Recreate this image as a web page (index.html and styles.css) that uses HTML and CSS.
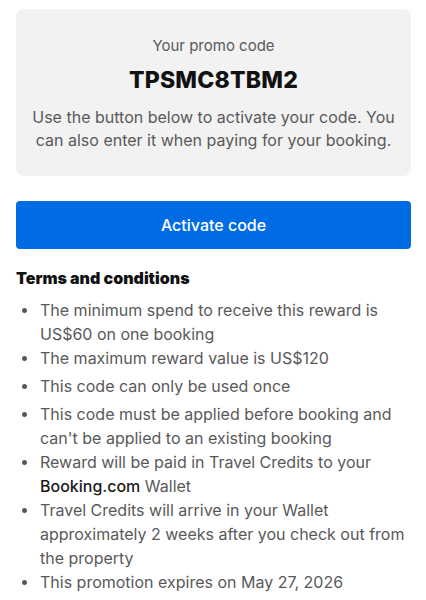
FILE: index.html
```html
<!doctype html>
<html lang="en">
<head>
	<meta charset="UTF-8">
	<title>Promo code</title>

	<link rel="stylesheet" href="styles.css">
</head>
<body>
	<div class="container">
		<div class="promo">
			<p class="promo-label">Your promo code</p>
			<p class="promo-code">TPSMC8TBM2</p>
			<p class="promo-text">Use the button below to activate your code. You can also enter it when paying for your booking.</p>
		</div>

		<button class="activate">Activate code</button>

		<h2>Terms and conditions</h2>
		<ul class="terms">
			<li>The minimum spend to receive this reward is US$60 on one booking</li>
			<li>The maximum reward value is US$120</li>
			<li>This code can only be used once</li>
			<li>This code must be applied before booking and can't be applied to an existing booking</li>
			<li>Reward will be paid in Travel Credits to your <strong>Booking.com</strong> Wallet</li>
			<li>Travel Credits will arrive in your Wallet approximately 2 weeks after you check out from the property</li>
			<li>This promotion expires on May 27, 2026</li>
		</ul>
	</div>
</body>
</html>
```

FILE: styles.css
```css
html {
	box-sizing: border-box;
}

*, *:before, *:after {
	box-sizing: inherit;
}

body {
	margin: 0;
	font-family: Inter, "Noto Sans", sans-serif;
	color: #595959;
	background: #fff;
}

.container {
	padding: 9px 15px 0 16px;
}

.promo {
	background: #f2f2f2;
	border-radius: 8px;
	padding: 27px 16px 24px;
	text-align: center;
}

.promo p {
	margin: 0;
}

.promo-label {
	font-size: 15px;
	line-height: 20px;
}

.promo-code {
	margin-top: 10px !important;
	font-size: 23px;
	font-weight: 800;
	color: #111;
	line-height: 28px;
	letter-spacing: 0.2px;
}

.promo-text {
	margin-top: 12px !important;
	font-size: 16px;
	line-height: 23px;
}

.activate {
	display: block;
	width: 100%;
	height: 48px;
	margin-top: 25px;
	border: 0;
	border-radius: 4px;
	background: #006ce4;
	color: #fff;
	font-family: inherit;
	font-size: 16px;
	font-weight: 500;
}

h2 {
	margin: 18px 0 9px;
	font-size: 16px;
	font-weight: 900;
	color: #111;
	line-height: 22px;
}

.terms {
	margin: 0;
	padding: 0;
	list-style: none;
}

.terms li {
	position: relative;
	min-height: 28px;
	padding-left: 24px;
	font-size: 16px;
	line-height: 24px;
}

.terms li:before {
	content: "";
	position: absolute;
	left: 6px;
	top: 10px;
	width: 5px;
	height: 5px;
	border-radius: 50%;
	background: #595959;
}

.terms strong {
	font-weight: 500;
	color: #1a1a1a;
}
```
